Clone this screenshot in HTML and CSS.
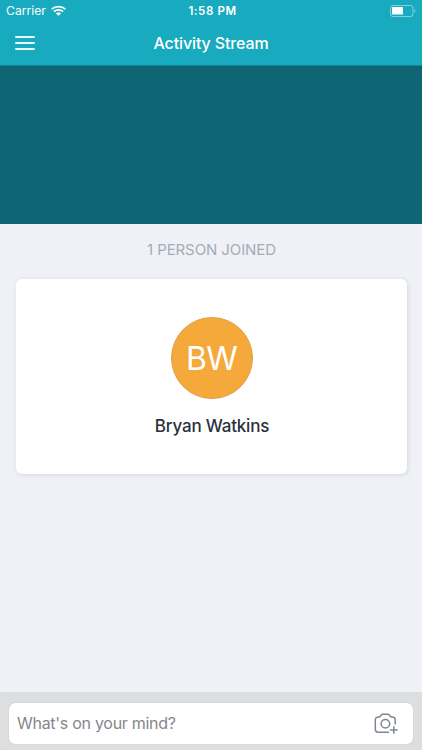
FILE: index.html
```
<!DOCTYPE html>
<html lang="en">
<head>
    <meta charset="UTF-8">
    <meta name="viewport" content="width=device-width, initial-scale=1.0">
    <title>Activity Stream</title>
    <link rel="stylesheet" href="styles.css">
</head>
<body>
    <header class="header">
        <div class="status-bar">
            <div class="carrier">
                <span>Carrier</span>
                <svg class="wifi" viewBox="0 0 14 11" width="15" height="11" preserveAspectRatio="none">
                    <path d="M0.7 4.2a9 9 0 0 1 12.6 0M2.8 6.6a6 6 0 0 1 8.4 0" fill="none" stroke="#fff" stroke-width="1.8"/>
                    <path d="M4.6 8.4a3.4 3.4 0 0 1 4.8 0L7 10.8z" fill="#fff"/>
                </svg>
            </div>
            <div class="time">1:58 PM</div>
            <svg class="battery" viewBox="0 0 28 13" width="28" height="13">
                <rect x="1.5" y="0.5" width="22.5" height="11" rx="2.5" fill="none" stroke="#fff" stroke-opacity="0.45"/>
                <rect x="3" y="2" width="11" height="7.6" rx="0.6" fill="#fff"/>
                <path d="M25.4 4.2v3.6a2 2 0 0 0 0-3.6z" fill="#fff" fill-opacity="0.45"/>
            </svg>
        </div>
        <div class="nav-bar">
            <button class="menu-button" aria-label="Menu">
                <span></span>
                <span></span>
                <span></span>
            </button>
            <h1>Activity Stream</h1>
        </div>
    </header>

    <div class="banner"></div>

    <main class="stream">
        <h2>1 PERSON JOINED</h2>
        <div class="card">
            <div class="avatar">BW</div>
            <div class="name">Bryan Watkins</div>
        </div>
    </main>

    <footer class="composer">
        <div class="input-box">
            <input type="text" placeholder="What's on your mind?">
            <svg class="camera" viewBox="0 0 24 22" width="24" height="22" fill="none" stroke="#7f8791" stroke-width="1.5" stroke-linecap="round" stroke-linejoin="round">
                <path d="M14.6 19.2H4.2a2.9 2.9 0 0 1-2.9-2.9V6.8a2.9 2.9 0 0 1 2.9-2.9h1.4l1.6-1.9a2 2 0 0 1 1.5-.7h5.1a2 2 0 0 1 1.5.7l1.6 1.9h1.4a2.9 2.9 0 0 1 2.9 2.9v4.2"/>
                <circle cx="11.4" cy="10.8" r="4.3"/>
                <path d="M19.8 13.7v6.6M16.5 17h6.6"/>
            </svg>
        </div>
    </footer>
</body>
</html>
```

FILE: styles.css
```
* {
    box-sizing: border-box;
}
body {
    margin: 0;
    height: 750px;
    display: flex;
    flex-direction: column;
    font-family: Inter, "Liberation Sans", sans-serif;
    background-color: #eff1f6;
    overflow: hidden;
}
.header {
    height: 66px;
    color: #fff;
    background-color: #18aabf;
    border-bottom: 1px solid #118799;
}
.status-bar {
    display: grid;
    grid-template-columns: 1fr auto 1fr;
    align-items: center;
    height: 22px;
    padding: 0 5px 0 6px;
    font-size: 12px;
}
.carrier {
    display: flex;
    align-items: center;
    gap: 5px;
    font-size: 12.2px;
    line-height: 14px;
}
.wifi {
    margin-top: -2px;
}
.time {
    padding-left: 2px;
    font-size: 11.5px;
    font-weight: 600;
    letter-spacing: 0.6px;
}
.battery {
    justify-self: end;
}
.nav-bar {
    display: grid;
    grid-template-columns: 1fr auto 1fr;
    align-items: center;
    height: 42px;
    padding: 0 15px;
}
.nav-bar h1 {
    margin: 0;
    font-size: 16px;
    font-weight: 500;
    line-height: 22px;
    letter-spacing: -0.13px;
}
.menu-button {
    display: flex;
    flex-direction: column;
    justify-content: space-between;
    width: 20px;
    height: 14px;
    padding: 0;
    border: none;
    background: none;
}
.menu-button span {
    width: 20px;
    height: 2px;
    border-radius: 1px;
    background-color: #e9f8fa;
}
.banner {
    height: 158px;
    background-color: #0e6675;
}
.stream {
    flex: 1;
    padding: 0 15px 0 16px;
}
.stream h2 {
    margin: 0;
    height: 55px;
    font-size: 15px;
    font-weight: 400;
    line-height: 51px;
    letter-spacing: -0.1px;
    text-align: center;
    color: #a5acb9;
}
.card {
    display: flex;
    flex-direction: column;
    align-items: center;
    height: 195px;
    padding-top: 38px;
    border-radius: 6px;
    background-color: #fff;
    box-shadow: 1px 1px 4px rgba(60, 70, 90, 0.15);
}
.avatar {
    width: 82px;
    height: 82px;
    border: 1px solid #dda04a;
    border-radius: 50%;
    font-size: 32px;
    line-height: 82px;
    letter-spacing: -0.8px;
    text-align: center;
    color: #fff;
    background-color: #f5a93b;
}
.name {
    margin-top: 15px;
    padding-left: 1px;
    font-size: 17px;
    font-weight: 500;
    line-height: 24px;
    letter-spacing: -0.2px;
    color: #2c303c;
}
.composer {
    height: 58px;
    padding: 11px 9px 0 9px;
    background-color: #dcdee0;
}
.input-box {
    display: flex;
    align-items: center;
    height: 41px;
    padding: 0 15px 0 8px;
    border-radius: 6px;
    background-color: #fff;
    box-shadow: 0 0 1px rgba(0, 0, 0, 0.25);
}
.input-box input {
    flex: 1;
    min-width: 0;
    padding: 0 0 1px;
    border: none;
    outline: none;
    font-family: inherit;
    font-size: 16px;
    letter-spacing: -0.28px;
    background: none;
}
.input-box input::placeholder {
    color: #85878c;
}
```
